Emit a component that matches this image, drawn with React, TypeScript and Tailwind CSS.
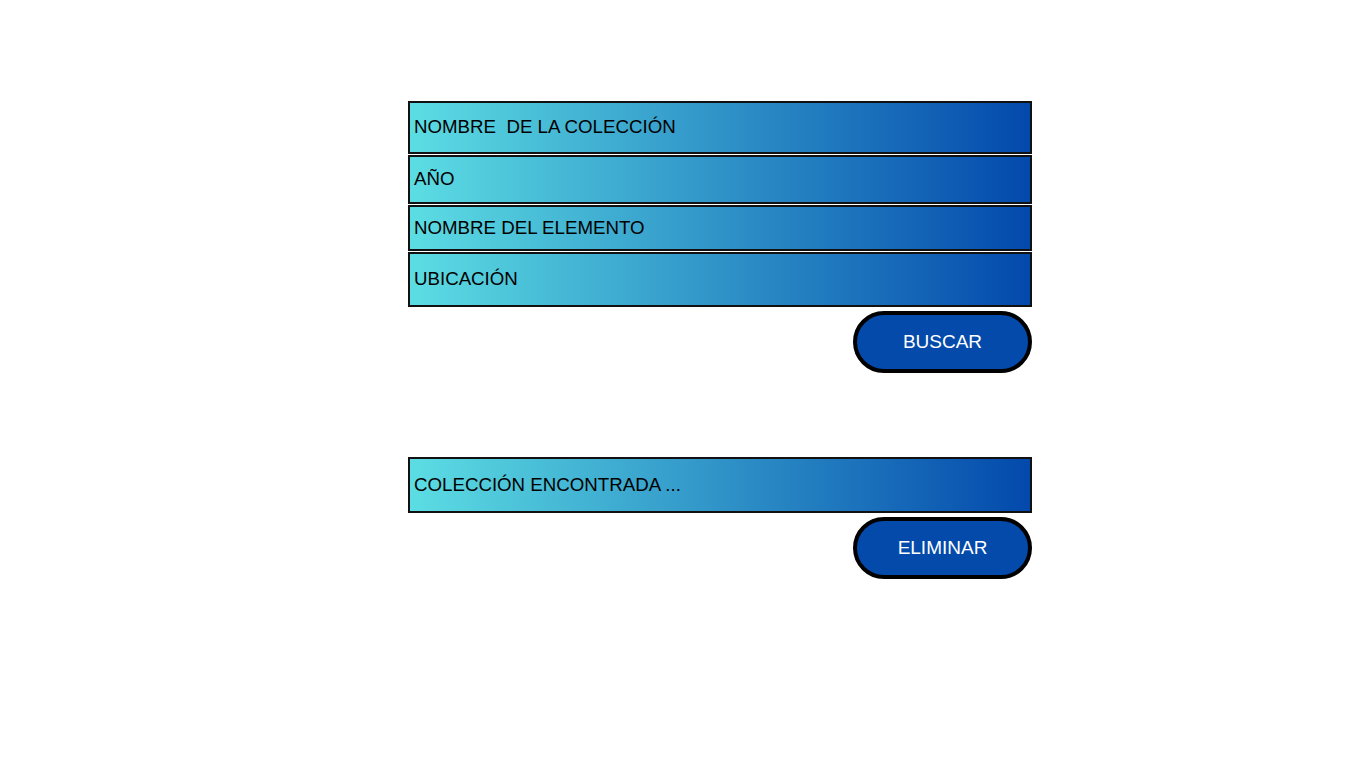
import React from "react";

const box =
  "w-[624px] border-2 border-[#111] bg-linear-to-r/srgb from-[#5cdde3] to-[#0349ac] flex items-center pl-[4px] text-[18.7px] text-black whitespace-pre";
const btn =
  "w-[179px] h-[62px] rounded-full border-[4px] border-black bg-[#034aaa] text-white text-[19px]";

export default function App() {
  return (
    <div className="w-[1366px] h-[768px] bg-white" style={{ fontFamily: '"Liberation Sans", Arial, sans-serif' }}>
      <div className="ml-[408px] pt-[101px] flex flex-col w-[624px]">
        <div className={`h-[53px] ${box}`}>NOMBRE  DE LA COLECCIÓN</div>
        <div className={`h-[49px] mt-[1px] ${box}`}>AÑO</div>
        <div className={`h-[46px] mt-[1px] ${box}`}>NOMBRE DEL ELEMENTO</div>
        <div className={`h-[55px] mt-[1px] ${box}`}>UBICACIÓN</div>
        <div className="flex justify-end mt-[4px]">
          <button className={btn}>BUSCAR</button>
        </div>
        <div className={`h-[56px] mt-[84px] ${box}`}>COLECCIÓN ENCONTRADA ...</div>
        <div className="flex justify-end mt-[4px]">
          <button className={btn}>ELIMINAR</button>
        </div>
      </div>
    </div>
  );
}
